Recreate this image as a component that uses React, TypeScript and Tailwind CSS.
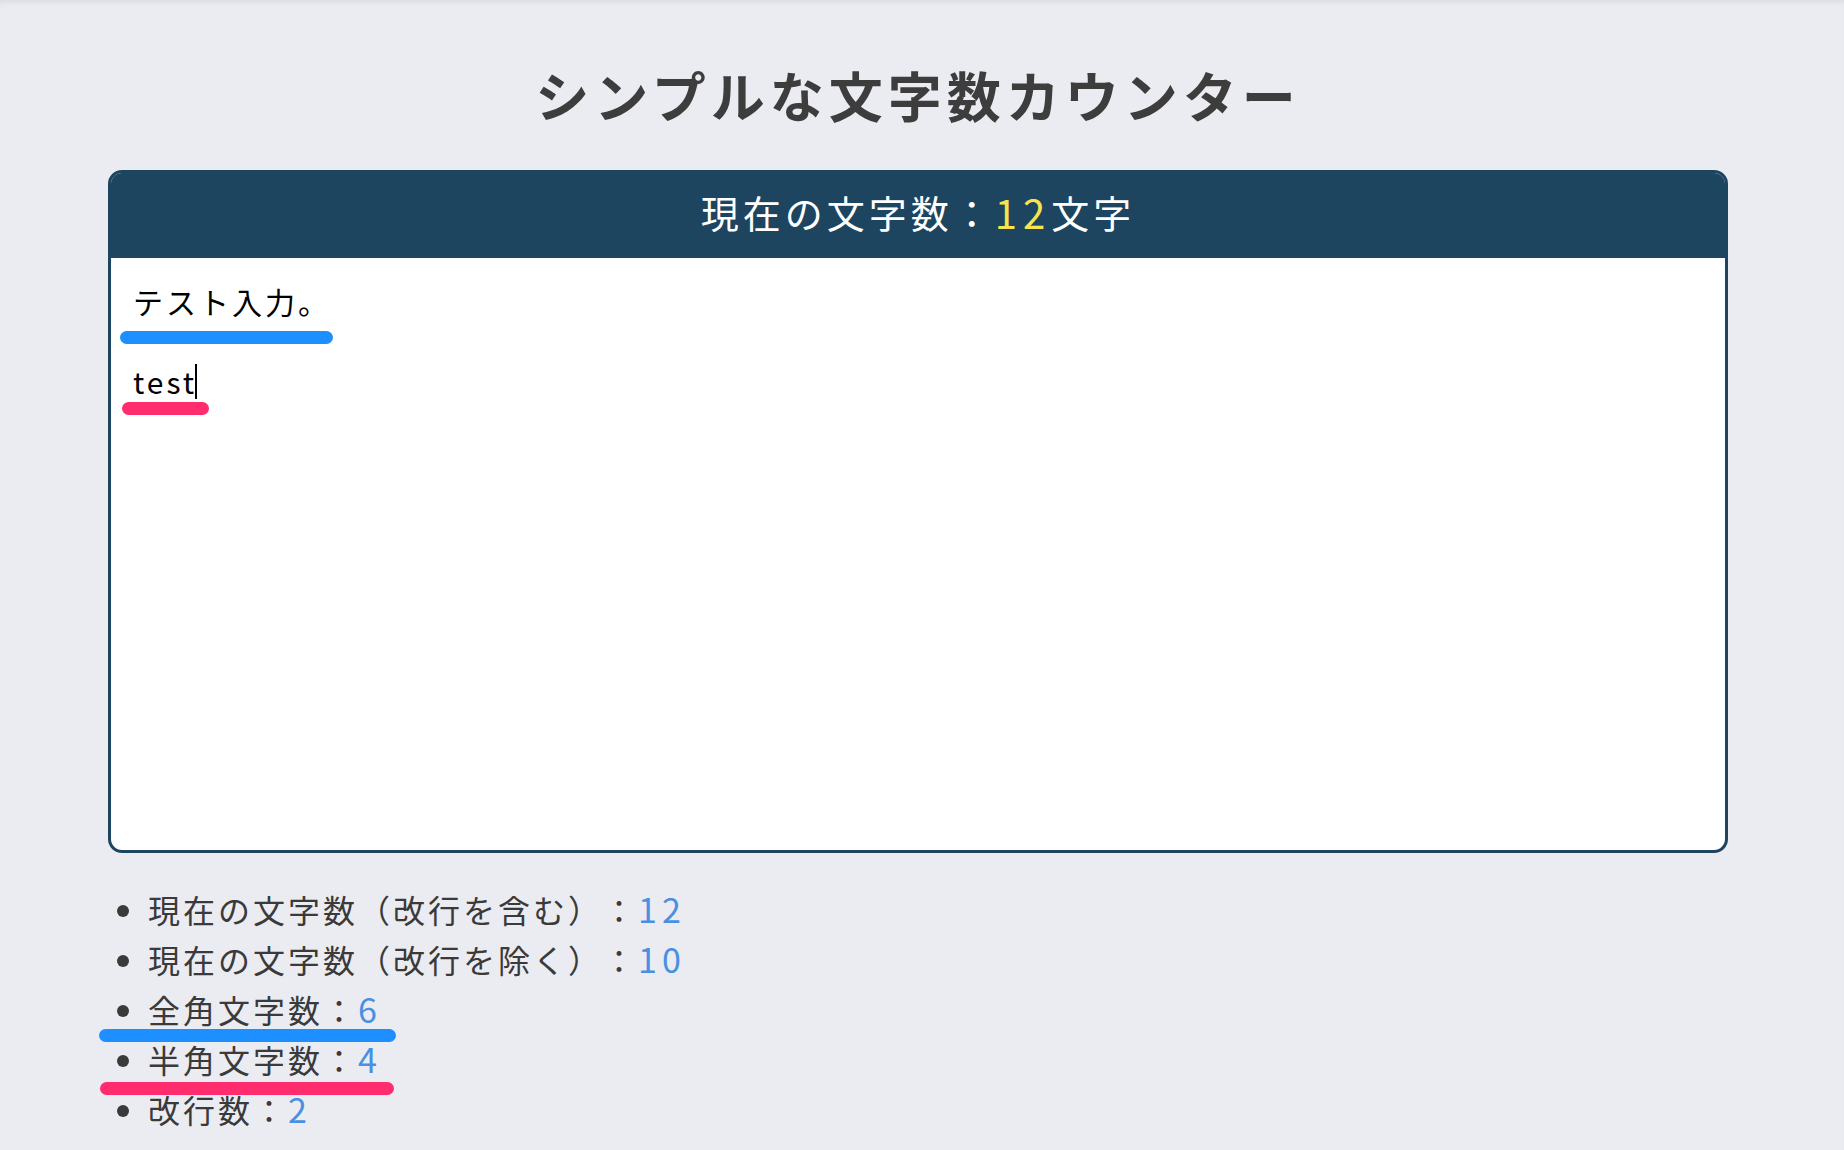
import React from "react";

const jp = { fontFamily: '"Noto Sans CJK JP", "Noto Sans", sans-serif' };

const stats = [
  { label: "現在の文字数（改行を含む）：", value: "12" },
  { label: "現在の文字数（改行を除く）：", value: "10" },
  { label: "全角文字数：", value: "6" },
  { label: "半角文字数：", value: "4" },
  { label: "改行数：", value: "2" },
];

export default function App() {
  return (
    <main
      style={jp}
      className="min-h-screen bg-[#ebecf1] shadow-[inset_0_6px_6px_-4px_rgba(0,0,0,0.08)] pt-[54px] pb-10 [text-spacing-trim:space-all]"
    >
      <div className="ml-[108px] w-[1620px]">
        {/* Title */}
        <h1 className="text-center text-[54px] leading-[81px] font-bold tracking-[5px] text-[#3d3d3d] mb-[35px]">
          シンプルな文字数カウンター
        </h1>

        {/* Counter card */}
        <div className="border-[3px] border-[#1d4560] rounded-[14px] overflow-hidden bg-white">
          <div className="h-[85px] pb-[8px] bg-[#1d4560] flex items-center justify-center text-white text-[38px] tracking-[4px]">
            現在の文字数：
            <span className="text-[#f7e34f] text-[40px] tracking-[6px]">12</span>
            文字
          </div>
          <div className="relative h-[592px] pl-[22px] pt-[23px] text-[30px] leading-[40px] tracking-[3px] text-black">
            <div>テスト入力。</div>
            <div className="h-[40px]" />
            <div className="flex items-center">
              <span>test</span>
              <span className="inline-block w-[2px] h-[35px] bg-black -ml-[2px]" />
            </div>
            {/* annotation marks */}
            <span className="absolute left-[9px] top-[73px] w-[213px] h-[13px] rounded-full bg-[#1e8fff]" />
            <span className="absolute left-[11px] top-[144px] w-[87px] h-[13px] rounded-full bg-[#ff2d6e]" />
          </div>
        </div>

        {/* Stats */}
        <ul className="relative mt-[31px] pl-[40px] list-disc text-[32px] leading-[50px] tracking-[3px] text-[#3a3a3a]">
          {stats.map((s) => (
            <li key={s.label} className="h-[50px] marker:text-[#3a3a3a]">
              {s.label}
              <span className="text-[#4a90e2] text-[34px] leading-none tracking-[5px]">{s.value}</span>
            </li>
          ))}
          {/* annotation marks */}
          <span className="absolute left-[-9px] top-[145px] w-[297px] h-[13px] rounded-full bg-[#1e8fff]" />
          <span className="absolute left-[-8px] top-[198px] w-[294px] h-[13px] rounded-full bg-[#ff2d6e]" />
        </ul>
      </div>
    </main>
  );
}
